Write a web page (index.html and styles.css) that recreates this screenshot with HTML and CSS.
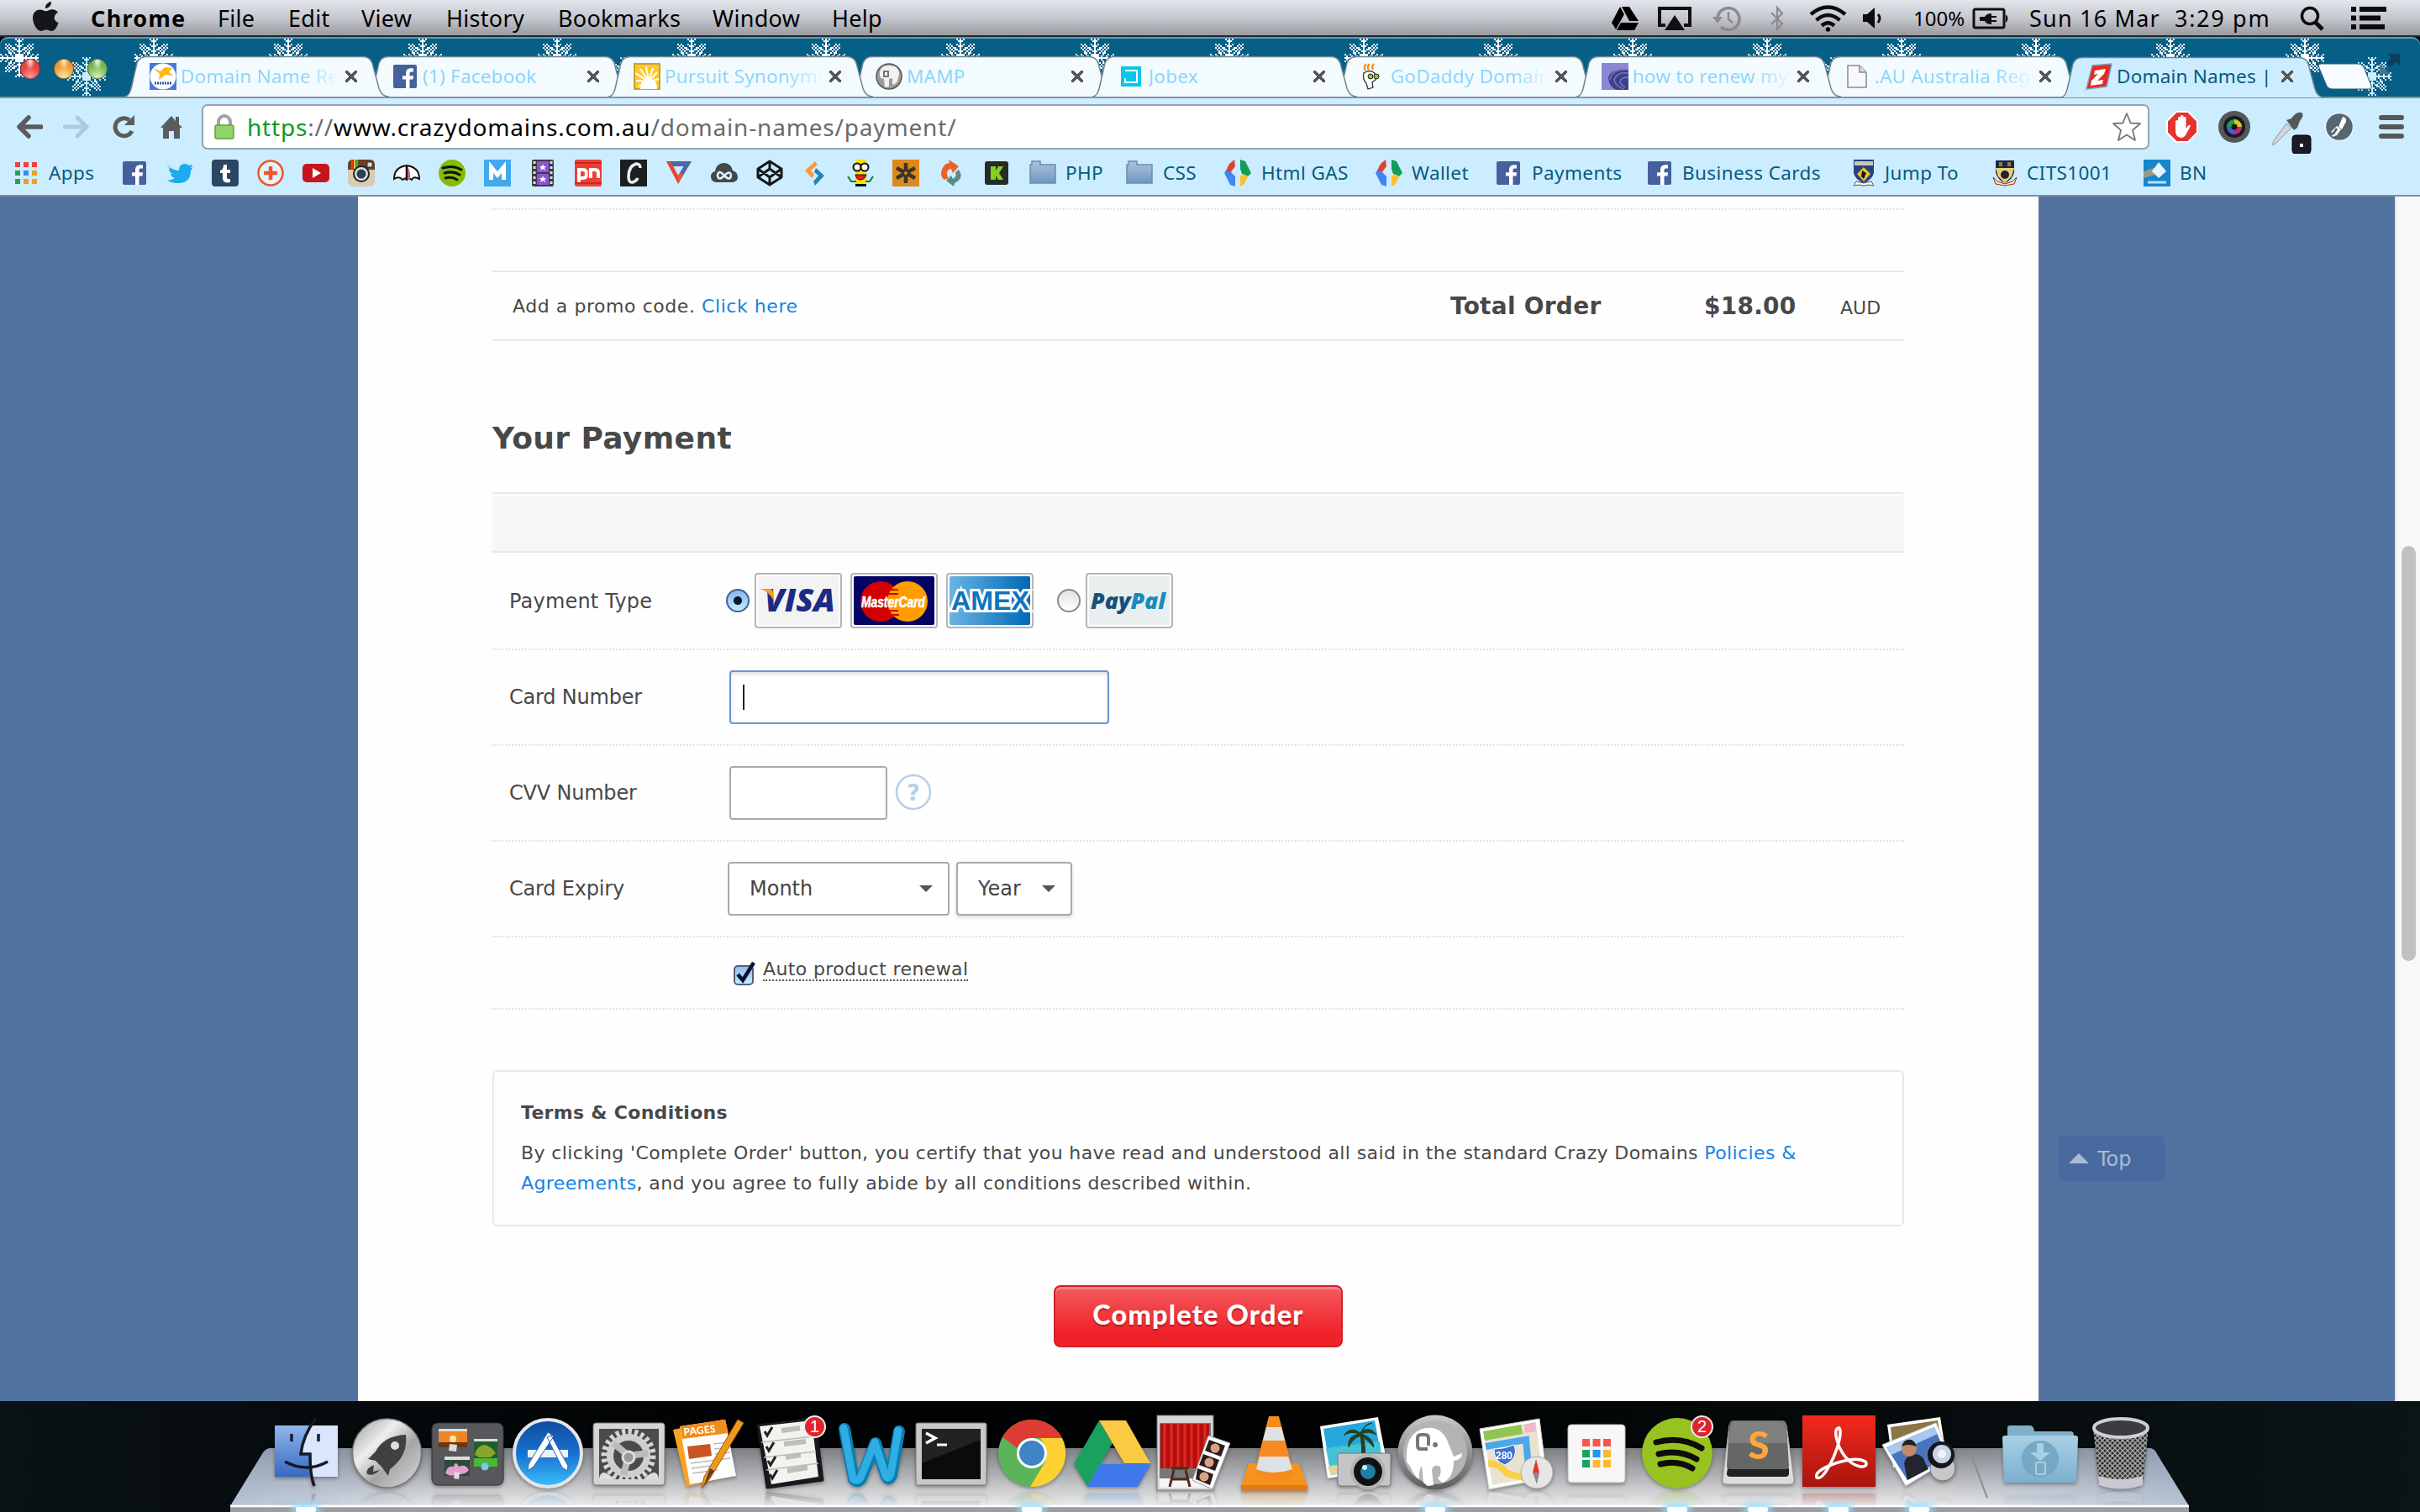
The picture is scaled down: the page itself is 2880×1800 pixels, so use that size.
FILE: index.html
```html
<!DOCTYPE html>
<html lang="en">
<head>
<meta charset="utf-8">
<title>Domain Names | Crazy Domains</title>
<link rel="stylesheet" href="styles.css">
</head>
<body>
<svg class="defs" width="0" height="0" aria-hidden="true">
  <defs>
    <linearGradient id="fold" x1="0" y1="0" x2="0" y2="1"><stop offset="0" stop-color="#a9c4df"/><stop offset="1" stop-color="#6f97c0"/></linearGradient>
    <path id="tabshape" d="M0 48C6 48 8 40 10 30L15 8Q18 .5 26 .5H284Q292 .5 295 8L303 38Q306 48 315 48"/>
    <symbol id="fb" viewBox="0 0 28 28"><rect width="28" height="28" rx="2" fill="#45619d"/><path d="M19.500 28V17.500h4l.6-4.300h-4.600v-2.600c0-1.400.6-2.200 2.200-2.200H24V4.400c-5.600-1-9 1-9 5.600v3.200h-4v4.300h4V28z" fill="#fff"/></symbol>
    <symbol id="folder" viewBox="0 0 32 28"><path d="M1 27V5h2V1h10v4h18v22z" fill="url(#fold)" stroke="#6d8cab" stroke-width="1.500"/></symbol>
    <symbol id="gas" viewBox="0 0 32 32"><path d="M12 0 6 5l-5 10 6 1 6-8z" fill="#db4437"/><path d="M2 13 0 16l7 14 6 2V20L8 15z" fill="#4285f4"/><path d="M19 0l6 2 7 14-4 4-7-3-2-6z" fill="#0f9d58"/><path d="M28 20l-4 9-5 3V20l4-3z" fill="#fbc02d"/></symbol>
    <symbol id="flake" viewBox="0 0 23 23">
      <g id="arm" shape-rendering="crispEdges"><path d="M11 0h1v12h-1zM9 0h1v1H9zM13 0h1v1h-1zM10 1h1v1h-1zM12 1h1v1h-1zM9 3h1v1H9zM13 3h1v1h-1zM10 4h1v1h-1zM12 4h1v1h-1zM8 5h1v1H8zM14 5h1v1h-1zM9 6h1v1H9zM13 6h1v1h-1zM10 7h3v1h-3zM10 9h3v3h-3zM9 10h1v1H9zM9 9h1v1H9zM8 8h1v1H8zM7 7h1v1H7zM6 6h1v1H6zM5 5h1v1H5zM4 4h1v1H4zM3 3h1v1H3zM5 3h1v1H5zM6 4h1v1H6zM7 5h1v1H7zM8 6h1v1H8zM3 5h1v1H3zM4 6h1v1H4zM5 7h1v1H5zM6 8h1v1H6z"/></g>
      <use href="#arm" transform="rotate(90 11.5 11.5)"/><use href="#arm" transform="rotate(180 11.5 11.5)"/><use href="#arm" transform="rotate(270 11.5 11.5)"/></symbol>
  </defs>
</svg>

<header class="menubar">
  <nav class="menus">
    <svg width="32" height="36" viewBox="0 0 32 36"><path d="M22 0c.4 4-3 8-7 8-.5-4 3-7.600 7-8zM30.500 25c-1.500 5-4.500 10-8 10-2.500 0-3.500-1.500-6.500-1.500S12 35 9.700 35C5 35 0 26 0 19.500 0 12.500 4.500 9.500 8.500 9.500c3 0 5 1.700 7 1.700s4.500-2 8-2c2.500 0 5 1.300 6.500 3.500-6.500 4-5 10.500.5 12.300z" fill="#15161c"/></svg>
    <b>Chrome</b><span>File</span><span>Edit</span><span>View</span><span>History</span><span>Bookmarks</span><span>Window</span><span>Help</span>
  </nav>
  <div class="status">
    <svg width="32" height="28" viewBox="0 0 32 28"><path d="M10 0 0 19l5 8L15 9z" fill="#000"/><path d="M12 0h9l11 17H21z" fill="#000"/><path d="M11 19h21l-5 9H6z" fill="#000"/></svg>
    <svg width="40" height="28" viewBox="0 0 40 28"><path d="M9 22H2V2h36v20h-7" fill="none" stroke="#111" stroke-width="4"/><path d="M20 10 32 28H8z" fill="#111"/></svg>
    <svg width="34" height="30" viewBox="0 0 34 30"><path d="M6 15A13 13 0 1 1 10 25" fill="none" stroke="#8a8a90" stroke-width="3.500"/><path d="M0 13h12l-6 8z" fill="#8a8a90"/><path d="M19 7v9l5 4" fill="none" stroke="#8a8a90" stroke-width="2.500"/></svg>
    <svg width="16" height="30" viewBox="0 0 16 30"><path d="M1 8l13 13-6 7V2l6 7L1 22" fill="none" stroke="#8a8a90" stroke-width="2.200"/></svg>
    <svg width="45" height="32" viewBox="0 0 45 32"><g fill="none" stroke="#0c0c0c" stroke-width="4.500"><path d="M2 11q20.500-17 41 0M8.500 18q14-12 28 0M15 24.500q7.500-6.500 15 0"/></g><circle cx="22.500" cy="29" r="2.700"/></svg>
    <svg width="24" height="26" viewBox="0 0 24 26"><path d="M0 8h5l9-8v25l-9-8H0z" fill="#0c0c0c"/><path d="M18 8q4 4.500 0 10" fill="none" stroke="#0c0c0c" stroke-width="2.800"/></svg>
    <span class="pct">100%</span>
    <svg width="44" height="26" viewBox="0 0 44 26"><rect x="2" y="2" width="36" height="22" rx="2" fill="none" stroke="#111" stroke-width="3"/><path d="M40 8q5 5 0 10zM9 11h6q2-4 8-4v3h6v2h-6v3h6v2h-6v3q-6 0-8-4H9z" fill="#111"/></svg>
    <span class="date">Sun 16 Mar</span><span class="time">3:29 pm</span>
    <svg width="30" height="30" viewBox="0 0 30 30"><circle cx="12" cy="12" r="9.500" fill="none" stroke="#0c0c0c" stroke-width="3.500"/><path d="M18 19l9 9" stroke="#0c0c0c" stroke-width="5"/></svg>
    <svg width="42" height="27" viewBox="0 0 42 27"><path d="M0 0h6v6H0zM0 10.500h6v6H0zM0 21h6v6H0zM10 0h32v6H10zM10 10.500h25v6H10zM10 21h30v6H10z" fill="#0c0c0c"/></svg>
  </div>
</header>

<section class="tabstrip">
  <svg class="snow" width="2880" height="72"><defs><pattern id="snowfall" width="160" height="72" patternUnits="userSpaceOnUse"><use href="#flake" x="0" y="2" width="46" height="46" fill="#fff"/><use href="#flake" x="80" y="24" width="46" height="46" fill="#c9eefc"/></pattern></defs><rect width="2880" height="72" fill="url(#snowfall)"/></svg>
  <div class="lights"><i class="r"></i><i class="y"></i><i class="g"></i></div>
  <div class="tabs">
    <div class="tab"><svg class="shape"><use href="#tabshape"/></svg>
      <svg class="fav" viewBox="0 0 32 32"><rect width="32" height="32" fill="#4a78d8"/><circle cx="16" cy="16" r="15.500" fill="#fff"/><path d="M4 6l9 4 5-5 9 1-4 5 5 4-9-1-8 6 1-7z" fill="#fdb813"/><path d="M6 24h20" stroke="#2a57b5" stroke-width="3" stroke-dasharray="2 1"/></svg><span class="t">Domain Name Re</span><b class="x"></b></div>
    <div class="tab"><svg class="shape"><use href="#tabshape"/></svg>
      <svg class="fav" viewBox="0 0 32 32"><use href="#fb" x="2" y="2" width="28" height="28"/></svg><span class="t short">(1) Facebook</span><b class="x"></b></div>
    <div class="tab"><svg class="shape"><use href="#tabshape"/></svg>
      <svg class="fav" viewBox="0 0 32 32"><rect x="1" y="1" width="30" height="30" fill="#fdc92f" stroke="#c9a32a" stroke-width="2"/><path d="M18 22 2 12M18 22 3 21M18 22 6 28M18 22 8 7M18 22 15 4M18 22 23 6M18 22l10-11M18 22l12-3" stroke="#fff" stroke-width="2"/><path d="M8 31q0-12 10-12t10 12z" fill="#fff"/></svg><span class="t">Pursuit Synonyms</span><b class="x"></b></div>
    <div class="tab"><svg class="shape"><use href="#tabshape"/></svg>
      <svg class="fav" viewBox="0 0 32 32"><circle cx="16" cy="16" r="15" fill="#9b9b9b" stroke="#555" stroke-width="1.500"/><path d="M5 15Q4 3 16 3t12 10l-2 9-4 4-2-1v-7l-4 1v9l-5 1-1-10-4-1z" fill="#f1f1f1"/><path d="M10 10h5v6h-5z" fill="none" stroke="#777" stroke-width="2"/></svg><span class="t short">MAMP</span><b class="x"></b></div>
    <div class="tab"><svg class="shape"><use href="#tabshape"/></svg>
      <svg class="fav" viewBox="0 0 32 32"><rect x="4" y="4" width="24" height="24" fill="#09c6ea"/><path d="M9 9h14v14H9v-5" fill="none" stroke="#fff" stroke-width="2"/></svg><span class="t short">Jobex</span><b class="x"></b></div>
    <div class="tab"><svg class="shape"><use href="#tabshape"/></svg>
      <svg class="fav" viewBox="0 0 32 32"><path d="M7 9q-3-4 1-8M11 8q-3-3 1-7M16 8q-2-4 1-7" stroke="#ef8b22" stroke-width="2.200" fill="none"/><path d="M5 12q7-5 13 0l1 8-4 3 1 6-6 2-2-7q-5-5-3-12z" fill="#fff" stroke="#333" stroke-width="1.300"/><circle cx="13" cy="16" r="3" fill="#8dc926" stroke="#222"/><circle cx="20" cy="16" r="3" fill="#8dc926" stroke="#222"/></svg><span class="t">GoDaddy Domain</span><b class="x"></b></div>
    <div class="tab"><svg class="shape"><use href="#tabshape"/></svg>
      <svg class="fav" viewBox="0 0 32 32"><rect width="32" height="32" fill="#8c86d4"/><path d="M32 8Q10 6 8 18q1 11 10 14h14z" fill="#3b4189"/><path d="M32 12q-14-2-17 8 1 7 11 11M32 17q-9 0-10 5 1 4 6 7M32 8Q12 6 10 20" stroke="#7377c4" stroke-width="1.500" fill="none"/></svg><span class="t">how to renew my</span><b class="x"></b></div>
    <div class="tab"><svg class="shape"><use href="#tabshape"/></svg>
      <svg class="fav" viewBox="0 0 32 32"><path d="M5 3h14l8 8v18H5z" fill="#f8f8f8" stroke="#8b8b8b" stroke-width="1.500"/><path d="M19 3v8h8" fill="#ddd" stroke="#8b8b8b" stroke-width="1.500"/></svg><span class="t">.AU Australia Reg</span><b class="x"></b></div>
    <div class="tab active"><svg class="shape"><use href="#tabshape" y="1"/></svg>
      <svg class="fav" viewBox="0 0 32 32"><path d="M8 3 31 1 25 28 1 31z" fill="#e8291f" stroke="#7a9ccc" stroke-width="1.500"/><path d="M11 9l13-2-2 6-8 8 7-1-1 5-14 2 1-6 8-8-5 1z" fill="#fff"/></svg><span class="t">Domain Names |</span><b class="x"></b></div>
    <svg class="newtab" width="66" height="32" viewBox="0 0 66 32"><path d="M4 1h44q6 0 8 6l8 20q1 4-3 4H18q-6 0-8-6L2 6Q0 1 4 1z" fill="#f6fcff" stroke="#2b5d78"/></svg>
    <svg class="full" width="24" height="24" viewBox="0 0 24 24"><path d="M9 0h15v15l-5-5-6 6-5-5 6-6z" fill="#0b405a"/><path d="M0 12l12 12H0z" fill="#4b7385"/></svg>
  </div>
</section>

<section class="toolbar">
  <div class="nav">
    <svg width="32" height="28" viewBox="0 0 32 28"><path d="M15 3 4 14l11 11M4 14h26" fill="none" stroke="#5a5c5e" stroke-width="5.500" stroke-linecap="round" stroke-linejoin="round"/></svg>
    <svg width="32" height="28" viewBox="0 0 32 28"><path d="M17 3l11 11-11 11M28 14H2" fill="none" stroke="#a9cbdb" stroke-width="5" stroke-linecap="round" stroke-linejoin="round"/></svg>
    <svg width="28" height="28" viewBox="0 0 28 28"><path d="M23 19A10.500 10.500 0 1 1 20 6" fill="none" stroke="#5a5c5e" stroke-width="5"/><path d="M26 0v12H14z" fill="#5a5c5e"/></svg>
    <svg width="26" height="28" viewBox="0 0 26 28"><path d="M13 1 0 15h3v13h7v-9h6v9h7V15h3l-4-4V2h-4v5z" fill="#5a5c5e"/></svg>
    <div class="omni">
      <svg width="24" height="30" viewBox="0 0 24 30"><path d="M5 14V9a7 7 0 0 1 14 0v5" fill="none" stroke="#a2a2a2" stroke-width="4"/><rect x="1" y="13" width="22" height="16" rx="2" fill="#93d36c" stroke="#5fa23d" stroke-width="1.500"/></svg>
      <span class="url"><span class="s">https</span><span class="p">://</span>www.crazydomains.com.au<span class="p">/domain-names/payment/</span></span>
      <svg class="star" width="36" height="36" viewBox="0 0 36 36"><path d="M18 2l4.500 11.500L34 14l-9 8 3 12-10-6.500L8 34l3-12-9-8 11.500-.5z" fill="#fff" stroke="#777" stroke-width="1.800" stroke-linejoin="round"/></svg>
    </div>
    <svg class="e1" width="38" height="38" viewBox="0 0 38 38"><path d="M12 1h14l11 11v14L26 37H12L1 26V12z" fill="#e5342f" stroke="#fff" stroke-width="2"/><path d="M11 21v-9q2-2 3 0v6V8q2-2 3 0v9V6q2-2 3.500 0v11V8q2-2 3 0v13l3-4q3-1 2 2l-5 9q-2 4-6 4-7 0-6.500-11z" fill="#fff"/></svg>
    <svg class="e2" width="40" height="40" viewBox="0 0 40 40"><circle cx="20" cy="20" r="19" fill="#54575a"/><circle cx="20" cy="20" r="13" fill="#1b1b1d"/><circle cx="20" cy="20" r="9" fill="#1d9f5a"/><path d="M20 11a9 9 0 0 1 9 9h-9z" fill="#d8c623"/><path d="M29 20a9 9 0 0 1-9 9v-9z" fill="#c2267b"/><path d="M20 29a9 9 0 0 1-9-9h9z" fill="#3d5fe0"/><circle cx="20" cy="20" r="3.500" fill="#111"/></svg>
    <svg class="e3" width="48" height="50" viewBox="0 0 48 50"><path d="M2 36 18 14l6 5L7 36l-5 4z" fill="#d2d6da" stroke="#8d9296"/><path d="M18 10l6-2q6-9 12-7 4 3-2 10l-3 8-4 3z" fill="#55585b"/><rect x="25" y="28" width="22" height="22" rx="4" fill="#1a1b26" stroke="#000"/><rect x="34" y="38" width="4" height="4" fill="#fff"/></svg>
    <svg class="e4" width="36" height="36" viewBox="0 0 36 36"><circle cx="18" cy="18" r="16.500" fill="#54666f" stroke="#eef" stroke-width="1.500"/><path d="M22 6q5 1 4 6l-5 9-4-3zM15 17l5 4-5 7-5 2-1-2 3-1 4-6-2-2-4 6-2-1z" fill="#fff"/></svg>
    <svg class="e5" width="30" height="28" viewBox="0 0 30 28"><path d="M3 3h24M3 14h24M3 25h24" stroke="#56585a" stroke-width="6" stroke-linecap="round"/></svg>
  </div>
  <div class="marks">
    <svg class="apps" width="26" height="26" viewBox="0 0 26 26"><path d="M0 0h6v6H0zM10 0h6v6h-6zM20 0h6v6h-6z" fill="#f04438"/><path d="M0 10h6v6H0zM0 20h6v6H0z" fill="#2e9a58"/><path d="M10 10h6v6h-6z" fill="#4285f4"/><path d="M20 10h6v6h-6zM20 20h6v6h-6zM10 20h6v6h-6z" fill="#f0a020"/></svg>
    <span class="apps-label">Apps</span>
    <div class="mini">
      <svg viewBox="0 0 32 32"><use href="#fb" x="2" y="2" width="28" height="28"/></svg>
      <svg viewBox="0 0 32 32"><path d="M1 6q6 7 14 7 0-8 7-8 3 0 5 2l4-1-2 4 3-1-3 4q0 16-17 15-6 0-11-3 5 0 9-3-4-1-5-5h3Q3 16 3 10l3 1Q1 8 1 6z" fill="#1daaf0"/></svg>
      <svg viewBox="0 0 32 32"><rect width="32" height="32" rx="4" fill="#2c4762"/><path d="M14 6h4v6h4v4h-4v6q1 2 4 1v4q-9 2-9-5v-6h-3v-3q4-1 4-7z" fill="#fff"/></svg>
      <svg viewBox="0 0 32 32"><circle cx="16" cy="16" r="14.500" fill="#e4f3fb" stroke="#f0562b" stroke-width="2.500"/><path d="M16 8v16M8 16h16" stroke="#f0562b" stroke-width="4.500"/></svg>
      <svg viewBox="0 0 32 32"><rect y="5" width="32" height="22" rx="5" fill="#c4161c"/><path d="M12 10v12l10-6z" fill="#fff"/></svg>
      <svg viewBox="0 0 32 32"><rect width="32" height="32" rx="6" fill="#d9cbb4"/><path d="M0 12V6q0-6 6-6h20q6 0 6 6v6z" fill="#6a4029"/><path d="M4 0h2v11H4z" fill="#e33"/><path d="M7 0h2v11H7z" fill="#fc3"/><path d="M10 0h2v11h-2z" fill="#4b4"/><circle cx="16" cy="17" r="9" fill="#ddd" stroke="#222" stroke-width="2"/><circle cx="16" cy="17" r="5.500" fill="#274052"/><rect x="23" y="3" width="6" height="6" fill="#cfe0e8" stroke="#333"/></svg>
      <svg viewBox="0 0 32 32"><path d="M1 23Q1 9 16 7q15 2 15 16-7-4-9 1-5-4-11 0-4-5-10-1z" fill="#fff" stroke="#111" stroke-width="2"/><path d="M16 7v18" stroke="#111" stroke-width="2.500" fill="none"/><path d="M17 8q4 6 3 15h-3z" fill="#d25a94"/></svg>
      <svg viewBox="0 0 32 32"><circle cx="16" cy="16" r="16" fill="#84bd00"/><path d="M5 10q12-4 22 2M7 16q10-3 18 2M8 22q8-2 14 2" fill="none" stroke="#111" stroke-width="3" stroke-linecap="round"/></svg>
      <svg viewBox="0 0 32 32"><rect width="32" height="32" fill="#44a8ee"/><path d="M8.500 24V9l7.500 9 7.500-9v15" fill="none" stroke="#fff" stroke-width="5"/></svg>
      <svg viewBox="0 0 32 32"><rect x="3" width="26" height="32" rx="2" fill="#3d3a44"/><rect x="9" y="2" width="14" height="13" fill="#8955d6"/><rect x="9" y="17" width="14" height="13" fill="#8955d6"/><path d="M6 2v28M26 2v28" stroke="#ddd" stroke-width="3" stroke-dasharray="3 3"/><path d="M16 5l1 3h3l-2 2 1 3-3-2-3 2 1-3-2-2h3zM16 19l1 3h3l-2 2 1 3-3-2-3 2 1-3-2-2h3z" fill="#fff"/></svg>
      <svg viewBox="0 0 32 32"><rect width="32" height="32" rx="2" fill="#ee4035"/><path d="M0 4h32M0 28h32" stroke="#c8281f" stroke-width="2"/><path d="M5 27V12h5q4 0 4 5t-4 5H6M19 22V12h5q4 0 4 4v6" fill="none" stroke="#fff" stroke-width="4"/></svg>
      <svg viewBox="0 0 32 32"><rect width="32" height="32" fill="#1c1f22"/><path d="M24 10q0-5-5-5-9 3-9 15 0 8 5 7 4-1 6-5" fill="none" stroke="#eee" stroke-width="3.500"/></svg>
      <svg viewBox="0 0 32 32"><path d="M1 2h30l-4 6H5z" fill="#4c66a8"/><path d="M1 2l14 27V19L7 4z" fill="#e8452c"/><path d="M31 2 15 29V19l9-15z" fill="#4c66a8"/><path d="M15 29l6-11-3-3-3 5z" fill="#f0562b"/></svg>
      <svg viewBox="0 0 32 32"><path d="M6 27q-6-1-6-7 0-5 5-6 1-9 10-10 9 0 11 9 6 2 6 8 0 5-6 6z" fill="#43474b"/><path d="M16 19q-7-8-8 0 1 7 8 0 7-7 8 0-1 7-8 0z" fill="none" stroke="#dff1fb" stroke-width="2.500"/></svg>
      <svg viewBox="0 0 32 32"><path d="M16 2 30 11v10L16 30 2 21V11zM2 11l14 10 14-10M2 21l14-10 14 10M16 2v9M16 21v9" fill="none" stroke="#14171a" stroke-width="3" stroke-linejoin="round"/></svg>
      <svg viewBox="0 0 32 32"><path d="M16 2 4 13l8 9 3-4-4-5 8-7z" fill="#f89a3c"/><path d="M17 10l10 9-11 12-2-5 6-7-5-4z" fill="#1d87b5"/></svg>
      <svg viewBox="0 0 32 32"><path d="M10 0h13v32H10z" fill="#fbe200"/><path d="M1 20l4 6h6M31 20l-4 6h-5" stroke="#1f7a32" stroke-width="2" fill="none"/><circle cx="12" cy="9" r="4.500" fill="#fff" stroke="#111" stroke-width="2"/><circle cx="21" cy="9" r="4.500" fill="#fff" stroke="#111" stroke-width="2"/><path d="M10 18h13q-2 6-7 6t-6-6z" fill="#e01f1f" stroke="#111"/><path d="M10 29h13v3H10z" fill="#111"/></svg>
      <svg viewBox="0 0 32 32"><rect width="32" height="32" fill="#dd8a1b"/><path d="M16 4v24M5 10l22 12M27 10 5 22" stroke="#3c3327" stroke-width="4.500"/><circle cx="16" cy="16" r="2" fill="#dd8a1b"/></svg>
      <svg viewBox="0 0 32 32"><path d="M5 12q3-8 9-8l-1-4 12 8-7 8-2-5q-5 0-5 6 0 3 2 5l-5 2Q2 20 5 12z" fill="#e8622a"/><path d="M25 12q7 10-5 16l-1 4-9-7 6-6 2 4q5-2 3-8z" fill="#5d8a82"/></svg>
      <svg viewBox="0 0 32 32"><rect x="2" y="2" width="28" height="28" rx="3" fill="#262b27"/><path d="M9 8h6v5l3-5h6l-5 8 5 8h-6l-3-5v5H9z" fill="#84d21f"/></svg>
    </div>
    <div class="named">
      <svg viewBox="0 0 32 32"><use href="#folder" y="1" width="32" height="28"/></svg><span>PHP</span>
      <svg viewBox="0 0 32 32"><use href="#folder" y="1" width="32" height="28"/></svg><span>CSS</span>
      <svg viewBox="0 0 32 32"><use href="#gas"/></svg><span>Html GAS</span>
      <svg viewBox="0 0 32 32"><use href="#gas"/></svg><span>Wallet</span>
      <svg viewBox="0 0 32 32"><use href="#fb" x="2" y="2" width="28" height="28"/></svg><span>Payments</span>
      <svg viewBox="0 0 32 32"><use href="#fb" x="2" y="2" width="28" height="28"/></svg><span>Business Cards</span>
      <svg viewBox="0 0 32 32"><path d="M4 0h24v16q-2 8-12 12Q6 24 4 16z" fill="#27417e"/><path d="M5 2h22v5H5z" fill="#c9c7b8"/><path d="M16 9l8 8-8 9-8-9z" fill="#efc02c"/><path d="M14 13l5 3-3 7-3-3z" fill="#141414"/><path d="M4 31l3-5 9 2 9-2 3 5-6-1-6 1-6-1z" fill="#fff" stroke="#555"/></svg><span>Jump To</span>
      <svg viewBox="0 0 32 32"><path d="M5 1h22v14q-2 9-11 13Q7 24 5 15z" fill="#182a4a"/><path d="M5 10h22l-3 10-8 8-8-8z" fill="#efcf75"/><circle cx="16" cy="18" r="5" fill="#1b2334"/><path d="M9 3h4v5H9zM19 3h4v5h-4z" fill="#a0793c"/><path d="M2 21l5 5 9 3 9-3 5-5-3 8-11 2-11-2z" fill="#f2e9d6" stroke="#a3281e"/></svg><span>CITS1001</span>
      <svg viewBox="0 0 32 32"><rect width="32" height="32" fill="#1685cd"/><path d="M0 14 15 9l2 8L0 22z" fill="#9a9c81"/><path d="M18 3l9 11-9 8-8-8z" fill="#e4f3fc"/><path d="M5 27h22" stroke="#b7def5" stroke-width="3"/></svg><span>BN</span>
    </div>
  </div>
</section>

<main class="viewport">
  <div class="sheet">
    <div class="prior"></div>
    <div class="total">
      <span class="promo">Add a promo code. <a>Click here</a></span>
      <b class="tl">Total Order</b><b class="amt">$18.00</b><span class="cur">AUD</span>
    </div>
    <h2>Your Payment</h2>
    <div class="band"></div>
    <div class="row first"><label>Payment Type</label>
      <div class="types">
        <i class="radio on"></i>
        <svg class="card" viewBox="0 0 104 66"><rect x="1" y="1" width="102" height="64" rx="3" fill="#fff" stroke="#b5b5b5" stroke-width="2"/><rect x="4" y="4" width="96" height="58" fill="#f3f3f3"/><text x="12" y="46" font-family="Open Sans" font-weight="800" font-style="italic" font-size="37" textLength="84" lengthAdjust="spacingAndGlyphs" fill="#1c2c84">VISA</text><path d="M6 19h12q4 0 4 5l1 10Q18 22 6 19z" fill="#f6a01c"/></svg>
        <svg class="card" viewBox="0 0 104 66"><rect x="1" y="1" width="102" height="64" rx="3" fill="#fff" stroke="#b5b5b5" stroke-width="2"/><rect x="4" y="4" width="96" height="58" rx="2" fill="#030364"/><circle cx="36" cy="34" r="24" fill="#d40000"/><circle cx="68" cy="34" r="24" fill="#ff9c00"/><path d="M47 20h10M45 25h12M45 45h12M48 50h10" stroke="#d40000" stroke-width="2"/><text x="13" y="41" font-family="Liberation Sans" font-weight="bold" font-style="italic" font-size="19" textLength="76" lengthAdjust="spacingAndGlyphs" fill="#fff" stroke="#fff" stroke-width=".6">MasterCard</text></svg>
        <svg class="card" viewBox="0 0 104 66"><defs><linearGradient id="amex"><stop offset="0" stop-color="#69b4e2"/><stop offset="1" stop-color="#0068b6"/></linearGradient></defs><rect x="1" y="1" width="102" height="64" rx="3" fill="#fff" stroke="#b5b5b5" stroke-width="2"/><rect x="4" y="4" width="96" height="58" rx="2" fill="url(#amex)"/><text x="6" y="44" font-family="Liberation Sans" font-weight="bold" font-size="31" textLength="93" lengthAdjust="spacingAndGlyphs" fill="#0f74bd" stroke="#fff" stroke-width="6" paint-order="stroke">AMEX</text></svg>
        <i class="radio off"></i>
        <svg class="card" viewBox="0 0 104 66"><rect x="1" y="1" width="102" height="64" rx="3" fill="#fff" stroke="#b5b5b5" stroke-width="2"/><rect x="4" y="4" width="96" height="58" fill="#e9efef"/><text x="6" y="43" font-family="Open Sans" font-weight="800" font-style="italic" font-size="26" textLength="89" lengthAdjust="spacingAndGlyphs" fill="#17507a">Pay<tspan fill="#1a8abb">Pal</tspan></text></svg>
      </div></div>
    <div class="row"><label>Card Number</label><div class="box wide"><i class="caret"></i></div></div>
    <div class="row"><label>CVV Number</label><div class="box small"></div>
      <svg class="help" width="44" height="44" viewBox="0 0 44 44"><circle cx="22" cy="22" r="20" fill="#fff" stroke="#b4cfe8" stroke-width="2.500"/><text x="22" y="32" text-anchor="middle" font-family="DejaVu Sans" font-weight="bold" font-size="27" fill="#b4cfe8">?</text></svg></div>
    <div class="row"><label>Card Expiry</label><div class="box month">Month<i class="arr"></i></div><div class="box year">Year<i class="arr"></i></div></div>
    <div class="row last"><label></label>
      <svg class="check" width="30" height="32" viewBox="0 0 30 32"><defs><linearGradient id="cb" x1="0" y1="0" x2="0" y2="1"><stop offset="0" stop-color="#8fbdf0"/><stop offset="1" stop-color="#c9eeff"/></linearGradient></defs><rect x="2" y="7" width="22" height="22" rx="4" fill="url(#cb)" stroke="#565e80" stroke-width="2"/><path d="M6 17l6 7L25 3" fill="none" stroke="#06122c" stroke-width="4.500"/></svg>
      <span class="auto">Auto product renewal</span></div>
    <div class="terms"><b>Terms &amp; Conditions</b>
      <p>By clicking 'Complete Order' button, you certify that you have read and understood all said in the standard Crazy Domains <a>Policies &amp;<br>Agreements</a>, and you agree to fully abide by all conditions described within.</p></div>
    <button class="go">Complete Order</button>
  </div>
  <div class="side"><div class="top"><i></i><span>Top</span></div></div>
  <div class="scroll"><i></i></div>
</main>

<footer class="desktop">
  <svg class="shelf" width="2880" height="132" viewBox="0 0 2880 132"><defs>
    <linearGradient id="sh" x1="0" y1="0" x2="0" y2="1"><stop offset="0" stop-color="#7c7e82"/><stop offset=".5" stop-color="#b4b5b8"/><stop offset="1" stop-color="#ececed"/></linearGradient>
    <linearGradient id="shx"><stop offset="0" stop-color="#9fb2cc" stop-opacity=".7"/><stop offset=".12" stop-color="#9fb2cc" stop-opacity="0"/><stop offset=".87" stop-color="#9fb2cc" stop-opacity="0"/><stop offset="1" stop-color="#9fb2cc" stop-opacity=".7"/></linearGradient></defs>
    <path d="M322 56H2558q6 0 9 7l38 62H274l38-62q4-7 10-7z" fill="url(#sh)"/><path d="M322 56H2558q6 0 9 7l38 62H274l38-62q4-7 10-7z" fill="url(#shx)"/>
    <path d="M274 126h2331v6H274z" fill="#9b9da0"/><path d="M274 125h2331" stroke="#fff" stroke-width="2.500"/><path d="M2346 64l19 51" stroke="#8c8d90" stroke-width="2"/></svg>
  <div class="dock">
    <div class="app on"><svg viewBox="0 0 96 92"><defs><linearGradient id="fi" x1="0" y1="0" x2="0" y2="1"><stop offset="0" stop-color="#8fb6ee"/><stop offset="1" stop-color="#3868c0"/></linearGradient></defs><path d="M11 15h75v61H11z" fill="#dbe5fb"/><path d="M11 15h43q-11 18-13 34h11l1 27H11z" fill="url(#fi)"/><path d="M31 25v9M63 25v9" stroke="#15202f" stroke-width="3.500"/><path d="M60 6Q44 28 42 49h11q0 26 5 38M23 58q26 14 51 0" fill="none" stroke="#141a26" stroke-width="3.500"/></svg></div>
    <div class="app"><svg viewBox="0 0 96 92"><defs><linearGradient id="lp" x1="0" y1="0" x2="1" y2="1"><stop offset="0" stop-color="#9d9d9d"/><stop offset=".35" stop-color="#eee"/><stop offset=".6" stop-color="#a5a5a5"/><stop offset="1" stop-color="#ddd"/></linearGradient></defs><circle cx="48.500" cy="48" r="41" fill="url(#lp)" stroke="#777" stroke-width="1.500"/><path d="M71 26q3 25-19 41l-2 8-8-11-7-7-9-2 9-9Q45 27 71 26zM33 62l-1 8 8-2q-8 8-15 5-3-6 8-11z" fill="#3f4042"/><circle cx="58" cy="39" r="5" fill="#ddd"/></svg></div>
    <div class="app"><svg viewBox="0 0 96 92"><rect x="6" y="12" width="85" height="74" rx="7" fill="#57585c" stroke="#333"/><rect x="14" y="19" width="34" height="22" fill="#f08528"/><path d="M14 35h34v6H14z" fill="#6b3513"/><circle cx="31" cy="31" r="4" fill="#ffe9a0"/><rect x="56" y="31" width="28" height="33" fill="#1f5f2a"/><path d="M57 50q2-10 11-12 8 1 14 10l-6 5H62z" fill="#8aa52c"/><path d="M56 54h28v10H56z" fill="#49b83c"/><rect x="21" y="52" width="30" height="23" fill="#2c4b3a"/><path d="M22 72q2-10 10-8 2-8 6 0 8-4 12 4-4 6-14 5-8 4-14-1z" fill="#e59fcb"/><path d="M14 19h34v3H14zM56 31h28v3H56zM21 52h30v4H21z" fill="#ddd"/><circle cx="69" cy="64" r="4.500" fill="#7fc6ee"/><path d="M27 37l9 1-1 8-9-1zM33 70l6 1-1 8-6-1z" fill="#ddd"/></svg></div>
    <div class="app"><svg viewBox="0 0 96 92"><defs><linearGradient id="as" x1="0" y1="0" x2="0" y2="1"><stop offset="0" stop-color="#114b9c"/><stop offset=".5" stop-color="#1870d0"/><stop offset="1" stop-color="#3bc0fa"/></linearGradient></defs><circle cx="48" cy="48" r="40" fill="url(#as)" stroke="#e4e6ea" stroke-width="4"/><path d="M24 44h48v9H24z" fill="#e8f2fb"/><path d="M48 23l7 5-24 36-7 5 1-8zM47 29l5-2 20 36-1 6-6-4z" fill="#fff" stroke="#2566ab"/></svg></div>
    <div class="app"><svg viewBox="0 0 96 92"><rect x="6" y="12" width="85" height="74" rx="3" fill="#d4d4d4" stroke="#777"/><rect x="13" y="19" width="71" height="60" fill="#4a4b4d"/><circle cx="48" cy="51" r="28" fill="none" stroke="#d6d6d6" stroke-width="9" stroke-dasharray="4 3.300"/><circle cx="48" cy="51" r="22" fill="none" stroke="#cfcfcf" stroke-width="8"/><path d="M48 51 30 36M48 51l23-3M48 51 42 74" stroke="#bbb" stroke-width="8"/><circle cx="48" cy="53" r="7" fill="#999" stroke="#ddd" stroke-width="3"/><path d="M13 79q2-16 18 0zM84 79q-2-16-18 0z" fill="#ddd"/></svg></div>
    <div class="app"><svg viewBox="0 0 96 92"><path d="M5 20l60-12 13 66-57 14z" fill="#f9a41e"/><path d="M13 16l54-8 13 67-55 10z" fill="#fdfdfd"/><path d="M13 16l54-8 4 16-55 7z" fill="#f18d1b"/><text x="18" y="27" font-family="Lato" font-weight="900" font-size="12" textLength="38" fill="#fff" transform="rotate(-6 18 27)">PAGES</text><path d="M22 40l27-3 2 14-27 4z" fill="#c85420"/><path d="M53 37l18-2M54 43l18-2M55 49l18-2M26 60l47-6M27 66l30-4M28 72l30-4" stroke="#bbb" stroke-width="1.500"/><path d="M82 8l7 4-40 66-10 12 3-14z" fill="#f09a1d" stroke="#9b5811"/><path d="M49 66l5 3-13 19z" fill="#5a3a22"/></svg></div>
    <div class="app"><svg viewBox="0 0 96 92"><path d="M10 15l68-8 9 73-66 9z" fill="#17191b" stroke="#17191b" stroke-width="3" stroke-linejoin="round"/><path d="M12 16l62-7 8 67-56 9z" fill="#f2f2ee"/><path d="M14 35l62-7M17 53l62-7M20 68l62-8" stroke="#bbb" stroke-width="1.500"/><path d="M18 22l3 5 6-10M20 40l3 5 6-10M22 57l3 5 6-10M24 73l3 5 6-10" stroke="#222" stroke-width="3" fill="none"/><path d="M38 21l22-3M41 37l26-3M43 53l18-3M45 69l24-4" stroke="#bdbdb9" stroke-width="6"/></svg><em>1</em></div>
    <div class="app"><svg viewBox="0 0 96 92"><g fill="none" stroke-linejoin="round" stroke-linecap="round"><path d="M17 19l11 60q4 5 9-1l17-42 13 40q3 5 6-2l9-52" stroke="#0c7db4" stroke-width="14"/><path d="M16 18l11 60q4 5 9-1l17-42 13 40q3 5 6-2l9-52" stroke="#2eaee2" stroke-width="9"/></g></svg></div>
    <div class="app"><svg viewBox="0 0 96 92"><rect x="6" y="12" width="84" height="74" rx="2" fill="#c8c8c8" stroke="#777"/><rect x="13" y="19" width="70" height="60" fill="#222"/><path d="M13 60 83 32v47H13z" fill="#0b0b0b"/><path d="M18 24l11 6-11 6" fill="none" stroke="#fff" stroke-width="3.500"/><path d="M31 38h12" stroke="#fff" stroke-width="3"/></svg></div>
    <div class="app on"><svg viewBox="0 0 96 92"><circle cx="48" cy="48" r="40" fill="#5bb35a"/><path d="M13 29A40 40 0 0 1 84 30H48q-14 0-17 12z" fill="#dd3b33"/><path d="M84 30A40 40 0 0 1 46 88l18-30q4-15-6-28z" fill="#fbd231"/><circle cx="48" cy="48" r="18" fill="#fff"/><circle cx="48" cy="48" r="15" fill="#3f84c4"/></svg></div>
    <div class="app"><svg viewBox="0 0 96 92"><path d="M32 9 48 36 18 88 2 61z" fill="#1aa15f"/><path d="M32 9h32l29 51H62z" fill="#fbc942"/><path d="M33 61h60L78 88H18z" fill="#3e79ec"/></svg></div>
    <div class="app"><svg viewBox="0 0 96 92"><rect x="5" y="3" width="67" height="89" fill="#d8d8d8" stroke="#777"/><rect x="8" y="12" width="61" height="77" fill="#777"/><path d="M8 78h61v11H8z" fill="#f4f4f4"/><path d="M9 13h58v53H9z" fill="#b30f0f"/><path d="M14 13v53M22 13v53M30 13v53M38 13v53M46 13v53M54 13v53M62 13v53" stroke="#e22a21" stroke-width="3"/><path d="M22 66h20M25 68l-5 20M39 68l5 20M22 79h20" stroke="#4a2c1b" stroke-width="3"/><path d="M66 27l26 9-21 55-24-11z" fill="#fff" stroke="#999"/><path d="M67 32l19 7-5 13-19-7zM60 49l19 7-5 13-19-7zM53 66l19 7-4 13-17-7z" fill="#2b1c1a"/><circle cx="74" cy="42" r="5.500" fill="#d9a285"/><circle cx="67" cy="59" r="5.500" fill="#d9a285"/><circle cx="61" cy="76" r="5.500" fill="#d9a285"/></svg></div>
    <div class="app"><svg viewBox="0 0 96 92"><path d="M18 60h60l10 27v5H9v-5z" fill="#f6921e"/><path d="M9 86h79v6H9z" fill="#e8790d"/><path d="M42 4h12l18 70q-24 12-48 0z" fill="#f78b1f"/><path d="M39 17h18l4 16H35zM31 52h34l5 15q-22 8-43 0z" fill="#dfe2e4"/></svg></div>
    <div class="app"><svg viewBox="0 0 96 92"><path d="M7 16l69-11 12 62-72 11z" fill="#fff"/><path d="M11 19l61-10 10 55-62 10z" fill="#27a8dc"/><path d="M14 42l64-8 4 30-62 10z" fill="#45c3d4"/><path d="M16 64l40-8 20 9-56 9z" fill="#e6d39a"/><path d="M56 58q2-20-2-34 12-10 20 2-10-5-18-1 14 4 15 16-8-10-16-14-10 4-14 14-2-14 13-16-11-4-19 2 8-12 20-3 6-12 14-12-12 4-12 13 5 14 3 33z" fill="#24401f" stroke="#24401f"/><rect x="28" y="48" width="63" height="39" rx="3" fill="#c3c5c8" stroke="#777"/><circle cx="64" cy="70" r="21" fill="#b3b3b3"/><circle cx="64" cy="70" r="17" fill="#111"/><circle cx="64" cy="70" r="9" fill="#1e7fa8"/><circle cx="60" cy="65" r="3" fill="#bff0ff"/></svg></div>
    <div class="app on"><svg viewBox="0 0 96 92"><defs><linearGradient id="mp" x1="0" y1="0" x2="0" y2="1"><stop offset="0" stop-color="#c9c9ca"/><stop offset="1" stop-color="#5c5c5e"/></linearGradient></defs><circle cx="48" cy="47" r="44.500" fill="url(#mp)"/><circle cx="48" cy="47" r="38" fill="#b4b4b6"/><path d="M14 58Q12 28 30 20q22-8 32 12l8 20 10-4q0 8-10 9 0 22-14 26l-5-5q5-4 3-14-8-4-10 4l2 18-7 1-5-4-2-20q-4 6-3 16-7-5-10-14z" fill="#fff"/><path d="M40 39V30q0-4-4-4h-5q-4 0-4 4v9q0 4 4 4h8" stroke="#77787b" stroke-width="4" fill="none"/><circle cx="48" cy="38" r="3" fill="#77787b"/></svg></div>
    <div class="app"><svg viewBox="0 0 96 92"><path d="M5 19 76 7l9 71-69 13z" fill="#fff" stroke="#ccc"/><path d="M9 22l63-11 8 64-60 11z" fill="#e8e2d0"/><path d="M9 22l45-8 2 11-45 8z" fill="#8fc650"/><path d="M12 40l48-8 5 54" fill="none" stroke="#4aa7ea" stroke-width="8"/><path d="M15 60q14 0 22 12l24 6 8-10" fill="none" stroke="#f8d04a" stroke-width="8"/><path d="M58 14l13-3 1 11-13 2z" fill="#f0b9c6"/><path d="M22 43q12 0 24-5 6 16-11 24-13-4-13-19z" fill="#3b71d8" stroke="#fff"/><text x="24" y="55" font-family="Liberation Sans" font-weight="bold" font-size="12" fill="#fff">280</text><circle cx="73" cy="71" r="19" fill="#e6e6e6" stroke="#aaa"/><path d="M72 55l4 16h-8z" fill="#e32"/><path d="M68 71h8l-3 14z" fill="#888"/></svg></div>
    <div class="app"><svg viewBox="0 0 96 92"><rect x="14" y="14" width="68" height="69" rx="4" fill="#f7f7f7" stroke="#bbb"/><path d="M31 31h9v9h-9zM43.500 31h9v9h-9zM56 31h9v9h-9z" fill="#f9564f"/><path d="M31 44h9v9h-9zM31 56h9v9h-9z" fill="#1ba261"/><path d="M43.500 44h9v9h-9z" fill="#1e97f3"/><path d="M56 44h9v9h-9zM43.500 56h9v9h-9zM56 56h9v9h-9z" fill="#fbb92f"/></svg></div>
    <div class="app on"><svg viewBox="0 0 96 92"><circle cx="48" cy="48" r="42" fill="#98c21f"/><path d="M23 35q29-8 54 7M26 49q24-6 45 6M28 61q21-5 38 5" fill="none" stroke="#0d0d0d" stroke-width="7" stroke-linecap="round"/></svg><em>2</em></div>
    <div class="app on"><svg viewBox="0 0 96 92"><path d="M14 14h68l9 66q0 5-5 5H11q-5 0-5-5z" fill="#dcdcdc" stroke="#999"/><path d="M12 66h73v6q0 4-4 4H15q-4 0-4-4z" fill="#222"/><path d="M19 9h58q5 0 5 5l3 49q0 4-4 4H15q-4 0-4-4l3-49q0-5 5-5z" fill="#666"/><path d="M16 14q1-4 5-4h54q5 0 6 4l2 22H13z" fill="#808080"/><text x="49" y="55" text-anchor="middle" font-family="Lato" font-weight="900" font-size="46" fill="#ffa53a">S</text></svg></div>
    <div class="app on"><svg viewBox="0 0 96 92"><defs><linearGradient id="ac" x1="0" y1="0" x2="0" y2="1"><stop offset="0" stop-color="#f32a1c"/><stop offset="1" stop-color="#a8140e"/></linearGradient></defs><rect x="5" y="3" width="87" height="85" fill="url(#ac)"/><path d="M48 18q-7 2 1 23 10 20 25 23 10 0 6-6-12-7-41 4-20 8-17 15 7 4 20-24 9-22 8-32-1-4-2-3z" fill="none" stroke="#fff" stroke-width="3.500"/></svg></div>
    <div class="app on"><svg viewBox="0 0 96 92"><path d="M10 14l63-9 8 50-64 10z" fill="#fff"/><path d="M14 17l56-8 5 30-58 10z" fill="#8b7645"/><path d="M4 38 68 12l18 42-54 33z" fill="#fff" stroke="#ccc"/><path d="M9 41l57-24 15 35-47 28z" fill="#4a74be"/><path d="M9 41l57-24 4 8-55 25z" fill="#a8c9ee"/><path d="M34 80l-4-20q2-8 8-9l7-2q8 2 10 10l4 8z" fill="#23242e"/><circle cx="36" cy="43" r="9" fill="#c08a68"/><path d="M27 40q3-10 12-8 6 4 5 8-9-4-17 0z" fill="#222"/><circle cx="76" cy="66" r="15" fill="#c8c8ca" stroke="#777"/><circle cx="74" cy="50" r="16" fill="#161616"/><circle cx="75" cy="49" r="11" fill="#c6d4e6"/><circle cx="75" cy="49" r="5" fill="#eef3fa"/></svg></div>
    <div class="gap"></div>
    <div class="app"><svg viewBox="0 0 96 92"><defs><linearGradient id="dl" x1="0" y1="0" x2="0" y2="1"><stop offset="0" stop-color="#a9d0e4"/><stop offset="1" stop-color="#7bb0cf"/></linearGradient></defs><path d="M10 30V18q0-3 3-3h24q4 0 5 7h43q4 0 4 4v5z" fill="#7fb0cb"/><path d="M4 30q0-3 3-3h84q3 0 3 3l-2 53H6z" fill="url(#dl)"/><circle cx="49" cy="55" r="22" fill="#76a8c5"/><path d="M45 36h8v11h8L49 57 37 47h8z" fill="#a8cfe3"/><rect x="44" y="59" width="11" height="14" rx="2" fill="none" stroke="#a8cfe3" stroke-width="2"/></svg></div>
    <div class="app"><svg viewBox="0 0 96 92"><defs><pattern id="mesh" width="6" height="6" patternUnits="userSpaceOnUse"><path d="M0 0l6 6M6 0 0 6" stroke="#aaa" stroke-width="1.300"/></pattern></defs><path d="M16 18h66l-7 66q-26 10-52 0z" fill="#2c2c2e"/><path d="M16 18h66l-7 66q-26 10-52 0z" fill="url(#mesh)"/><path d="M22 75q27 8 53 0v11q-26 9-52 0z" fill="#c9c9cf"/><ellipse cx="49" cy="18" rx="32" ry="11" fill="#3b3c3e" stroke="#cfd0d6" stroke-width="4"/></svg></div>
  </div>
</footer>
</body>
</html>
```
FILE: styles.css
```css
* { box-sizing: border-box; }
body { margin: 0; width: 2880px; height: 1800px; overflow: hidden; background: #020405; font-family: "Noto Sans", sans-serif; color: #000; }
svg { display: block; flex: none; }
.defs { position: absolute; }

/* menu bar */
.menubar { height: 44px; display: flex; justify-content: space-between; background: linear-gradient(#e3e6ec, #c6c8d0 50%, #9a9ba0); border-bottom: 2px solid #1d2b31; font-size: 27px; line-height: 43px; white-space: nowrap; }
.menus { display: grid; grid-template-columns: 69px 151px 84px 87px 101px 133px 184px 142px 70px; padding-left: 39px; letter-spacing: .3px; }
.menus b { letter-spacing: 1.3px; }
.menus svg { margin-top: 2px; }
.status { display: grid; grid-template-columns: 55px 65px 69px 46px 64px 60px 70px 68px 173px 149px 61px 82px; align-items: center; width: 962px; }
.status .pct { font-size: 24px; }
.date { letter-spacing: 1.2px; }
.time { letter-spacing: 1.7px; }

/* tab strip */
.tabstrip { position: relative; height: 73px; background: #055f86; border-bottom: 2px solid #8b9499; border-radius: 9px 9px 0 0; box-shadow: inset 0 2px rgba(190, 235, 245, .45); display: flex; align-items: flex-end; }
.snow { position: absolute; left: 0; top: 0; }
.lights { display: flex; gap: 16px; width: 148px; padding: 0 0 21px 24px; position: relative; }
.lights i { width: 24px; height: 24px; border-radius: 50%; border: 1px solid rgba(0,0,0,.4); }
.lights .r { background: radial-gradient(ellipse at 50% 12%, #ffe1de, rgba(255,225,222,0) 35%), radial-gradient(circle at 50% 95%, #ff9d93, #e84340 55%); }
.lights .y { background: radial-gradient(ellipse at 50% 12%, #fff0d4, rgba(255,240,212,0) 35%), radial-gradient(circle at 50% 95%, #ffe9a0, #ea9a35 60%); }
.lights .g { background: radial-gradient(ellipse at 50% 12%, #f0ffe4, rgba(240,255,228,0) 35%), radial-gradient(circle at 50% 95%, #d8f5b8, #78b552 60%); }
.tabs { display: flex; align-items: flex-end; }
.tab { position: relative; width: 315px; height: 48px; margin-right: -27px; display: flex; align-items: center; padding: 0 0 0 30px; flex: none; }
.tab:nth-child(odd) { z-index: 2; }
.tab .shape { position: absolute; left: 0; top: 0; width: 315px; height: 48px; overflow: visible; fill: #f3fbff; stroke: #6f8590; stroke-width: 1.5; }
.tab.active { z-index: 5; }
.tab.active .shape { fill: #cbedff; }
.fav { width: 32px; height: 32px; position: relative; }
.t { position: relative; width: 186px; margin-left: 5px; line-height: 48px; font-size: 22.500px; letter-spacing: .2px; color: #8ed5fb; overflow: hidden; white-space: nowrap; -webkit-mask-image: linear-gradient(90deg, #000 78%, rgba(0,0,0,.1)); }
.t.short, .active .t { -webkit-mask-image: none; }
.active .t { color: #075a80; }
.x { position: relative; width: 14px; height: 14px; margin-left: 10px; background: linear-gradient(45deg, transparent 42%, #55585a 42% 58%, transparent 58%), linear-gradient(-45deg, transparent 42%, #55585a 42% 58%, transparent 58%); }
.newtab { margin: 0 0 8px 18px; position: relative; }
.full { margin: 0 0 27px 8px; position: relative; }

/* toolbar */
.toolbar { height: 117px; background: #cbedff; border-bottom: 2px solid #858c90; }
.nav { height: 69px; display: flex; align-items: center; padding: 0 0 2px 19px; }
.nav > svg:nth-child(2) { margin-left: 24px; }
.nav > svg:nth-child(3) { margin-left: 27px; }
.nav > svg:nth-child(4) { margin-left: 29px; }
.omni { width: 2318px; height: 54px; margin-left: 23px; background: #fff; border: 2px solid #8fa5b0; border-radius: 7px; display: flex; align-items: center; padding: 0 7px 0 13px; flex: none; }
.url { margin-left: 15px; font-size: 28px; line-height: 50px; white-space: nowrap; letter-spacing: .82px; }
.url .s { color: #0b9b1c; }
.url .p { color: #6a6a6a; }
.star { margin-left: auto; }
.nav .e1 { margin-left: 20px; }
.nav .e2 { margin-left: 23px; }
.nav .e3 { margin: 14px 0 0 24px; }
.nav .e4 { margin-left: 15px; }
.nav .e5 { margin-left: 29px; }
.marks { display: flex; align-items: center; height: 40px; padding-left: 18px; color: #075a80; font-size: 22.500px; line-height: 38px; letter-spacing: .4px; white-space: nowrap; }
.apps-label { width: 86px; margin-left: 14px; padding-bottom: 1px; }
.mini { display: grid; grid-template-columns: repeat(20, 54px); }
.mini svg, .named svg { width: 32px; height: 32px; }
.named { display: grid; align-items: center; margin-left: 1px; grid-template-columns: 43px 72px 44px 73px 44px 136px 43px 99px 44px 136px 43px 200px 41px 127px 42px 139px 43px 40px; }
.named span { padding-bottom: 1px; }

/* page */
.viewport { height: 1434px; display: flex; background: #5273a0; font-family: "DejaVu Sans", sans-serif; color: #484848; font-size: 22px; }
.sheet { width: 2000px; margin-left: 426px; padding: 0 160px; background: #fefefe; display: flex; flex-direction: column; }
.sheet a { color: #1483e6; }
.prior { height: 16px; border-bottom: 2px dotted #dbe4ea; }
.total { margin-top: 72px; height: 84px; border-top: 2px solid #deeaf4; border-bottom: 2px solid #deeaf4; display: grid; grid-template-columns: 1116px 302px 162px 60px; padding-left: 24px; line-height: 82px; white-space: nowrap; }
.total b { font-size: 28px; letter-spacing: .25px; }
.promo { letter-spacing: .56px; }
.cur { padding-top: 2px; }
h2 { margin: 98px 0 0; font-size: 36px; line-height: 36px; height: 82px; letter-spacing: .4px; }
.band { height: 72px; background: #f5f7f9; border-top: 2px solid #e2e9ef; border-bottom: 2px solid #e2e9ef; border-radius: 4px 4px 0 0; box-shadow: inset 0 2px #fff; }
.row { height: 114px; border-bottom: 2px dotted #dbe4ea; display: flex; align-items: center; padding-left: 20px; font-size: 24px; }
.row.first { height: 116px; }
.row.first label { letter-spacing: .2px; padding-top: 2px; }
.row.last { height: 86px; }
label { width: 262px; letter-spacing: -.2px; flex: none; }
.types { display: flex; align-items: center; margin-left: -4px; }
.radio { width: 28px; height: 28px; border-radius: 50%; border: 2px solid #8b8b8b; background: linear-gradient(#e2e2e2, #fff); }
.radio.on { border-color: #46628f; background: radial-gradient(circle, #08152b 0 4.500px, transparent 5.500px), linear-gradient(#86b8ee, #c4ebff); margin-right: 6px; }
.radio.off { margin: 0 6px 0 18px; }
.card { width: 104px; height: 66px; margin-right: 10px; }
.box { height: 64px; border: 2px solid #a9a9b0; border-radius: 4px; background: #fff; display: flex; align-items: center; color: #444; }
.wide { width: 452px; border-color: #6c94d2; box-shadow: inset 0 3px 4px rgba(0,0,0,.12); padding-left: 14px; border-width: 2.500px; }
.caret { width: 2px; height: 30px; background: #222; }
.box.small { width: 188px; }
.help { margin: 0 0 2px 9px; }
.month { width: 264px; margin-left: -2px; padding: 0 18px 0 24px; justify-content: space-between; }
.year { width: 138px; margin-left: 8px; padding: 0 18px 0 24px; justify-content: space-between; box-shadow: 0 2px 4px rgba(0,0,0,.15); }
.arr { border: 8px solid transparent; border-top-color: #555; border-bottom: 0; }
.check { margin: 1px 0 0 4px; }
.auto { margin: -7px 0 0 6px; font-size: 22px; line-height: 25px; letter-spacing: .38px; border-bottom: 2px dotted #555; }
.terms { margin-top: 72px; height: 186px; border: 2px solid #e4eaef; border-radius: 6px; padding: 31px 32px; line-height: 36px; white-space: nowrap; letter-spacing: .39px; }
.terms b { letter-spacing: .3px; }
.terms p { margin: 12px 0 0; }
.go { align-self: center; margin-top: 70px; width: 344px; height: 74px; padding: 0 0 5px; border: 2px solid #cf2029; border-radius: 8px; background: linear-gradient(#f55a5e, #ee2228 80%); box-shadow: inset 0 3px 1px rgba(255,255,255,.25); color: #fff; font: 900 32.500px "Lato", sans-serif; text-shadow: 0 2px 2px rgba(120,0,0,.5); letter-spacing: 1.2px; white-space: nowrap; }
.side { width: 424px; padding: 1118px 0 0 24px; }
.top { width: 126px; height: 54px; background: #486a9e; border-radius: 6px; color: #a9bbd4; font-size: 24px; display: flex; align-items: center; gap: 10px; padding-left: 12px; }
.top span { padding-top: 2px; }
.top i { border: 12px solid transparent; border-top: 0; border-bottom-color: #a9bbd4; }
.scroll { width: 30px; background: #f8f8f8; border-left: 2px solid #e4e4e4; padding: 416px 0 0 6px; }
.scroll i { display: block; width: 17px; height: 494px; border-radius: 9px; background: #c1c1c1; }

/* dock */
.desktop { position: relative; height: 132px; background: linear-gradient(90deg, #0a1216, #010203 30%, #020404 60%, #0b1417); overflow: hidden; }
.shelf { position: absolute; left: 0; top: 0; }
.dock { position: relative; display: flex; padding: 14px 0 0 316px; }
.app { position: relative; width: 96px; height: 118px; }
.app svg { width: 96px; height: 92px; filter: drop-shadow(0 2px 2px rgba(0,0,0,.35)); -webkit-box-reflect: below 0 linear-gradient(transparent 78%, rgba(0,0,0,.3)); }
.app.on::after { content: ""; position: absolute; left: 36px; bottom: 0; width: 24px; height: 6px; background: #fff; border-radius: 2px; box-shadow: 0 0 8px 4px #9bdcf7; }
.app em { position: absolute; left: 64px; top: 3px; width: 27px; height: 27px; border: 2px solid #eee; border-radius: 50%; background: #e0242d; color: #fff; font: 20px/23px "Liberation Sans", sans-serif; text-align: center; }
.gap { width: 47px; }
```
